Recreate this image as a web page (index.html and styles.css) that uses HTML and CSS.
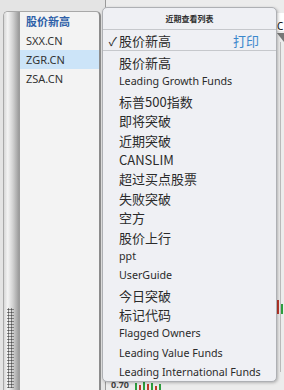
FILE: index.html
```html
<!DOCTYPE html>
<html lang="zh-CN">
<head>
    <meta charset="UTF-8">
    <title>近期查看列表</title>
    <link rel="stylesheet" href="styles.css">
</head>
<body>
    <div class="app">
        <!-- Left symbol list -->
        <div class="side">
            <div class="grip"><div class="dots"></div></div>
            <div class="list">
                <div class="list-head">股价新高</div>
                <div class="list-row">SXX.CN</div>
                <div class="list-row selected">ZGR.CN</div>
                <div class="list-row">ZSA.CN</div>
            </div>
        </div>

        <!-- Chart behind the menu -->
        <div class="chart">
            <div class="combo"><span class="combo-text">C</span></div>
            <div class="combo-arrow"></div>
            <div class="axis-line"></div>
            <div class="candles-right">
                <span class="c red" style="height:14px"></span>
                <span class="c green" style="height:10px"></span>
            </div>
            <div class="bottom-strip">
                <span class="price">0.70</span>
                <span class="mini green" style="height:7px"></span>
                <span class="mini red" style="height:5px"></span>
                <span class="mini green" style="height:8px"></span>
                <span class="mini red" style="height:6px"></span>
                <span class="mini green" style="height:7px"></span>
                <span class="mini red" style="height:4px"></span>
                <span class="mini green" style="height:6px"></span>
            </div>
        </div>
    </div>

    <!-- Recent lists popup -->
    <div class="menu">
        <div class="menu-title">近期查看列表</div>
        <div class="menu-current">
            <span class="check">✓</span>
            <span class="current-name">股价新高</span>
            <span class="print">打印</span>
        </div>
        <ul class="menu-list">
            <li class="cjk">股价新高</li>
            <li class="lat">Leading Growth Funds</li>
            <li class="cjk">标普500指数</li>
            <li class="cjk">即将突破</li>
            <li class="cjk">近期突破</li>
            <li class="cjk">CANSLIM</li>
            <li class="cjk">超过买点股票</li>
            <li class="cjk">失败突破</li>
            <li class="cjk">空方</li>
            <li class="cjk">股价上行</li>
            <li class="lat">ppt</li>
            <li class="lat">UserGuide</li>
            <li class="cjk">今日突破</li>
            <li class="cjk">标记代码</li>
            <li class="lat">Flagged Owners</li>
            <li class="lat">Leading Value Funds</li>
            <li class="lat">Leading International Funds</li>
        </ul>
    </div>
</body>
</html>
```

FILE: styles.css
```css
body { margin: 0; width: 284px; height: 390px; overflow: hidden; background: #e4e4e4; font-family: "Noto Sans", "Noto Sans CJK SC", sans-serif; color: #2b2b2b; position: relative; }
.app { display: flex; height: 390px; }

.side { display: flex; width: 95px; margin: 11px 0 0 3px; border: 1px solid #a8a8a8; border-bottom: none; border-right: 2px solid #8c8c8c; border-radius: 5px 5px 0 0; background: #f3f3f3; }
.grip { width: 15px; display: flex; flex-direction: column; justify-content: flex-end; border-radius: 4px 0 0 0; background: linear-gradient(to right, #d8d8d8, #f4f4f4 25%, #d0d0d0 60%, #9a9a9a); border-right: 1px solid #9c9c9c; }
.dots { height: 80px; margin: 0 0 2px 3px; width: 7px; background-image: radial-gradient(circle, #555 0.9px, transparent 1.2px); background-size: 3px 3px; }
.list { flex: 1; font-size: 11px; padding-top: 1px; }
.list-head { height: 18px; line-height: 18px; padding-left: 6px; color: #2e5fa8; font-weight: bold; }
.list-row { height: 19px; line-height: 19px; padding-left: 6px; color: #333; }
.list-row.selected { background: #cce4f8; }

.chart { flex: 1; position: relative; margin-left: 4px; border-left: 1px solid #9a9a9a; background: #ececec; }
.combo { position: absolute; right: 0; top: 13px; width: 8px; height: 18px; background: #fff; border-left: 1px solid #999; }
.combo-text { font-size: 10px; line-height: 18px; padding-left: 1px; color: #111; }
.combo-arrow { position: absolute; right: 0; top: 33px; width: 0; height: 0; border-left: 7px solid transparent; border-top: 9px solid #777; }
.axis-line { position: absolute; right: 3px; top: 42px; width: 1px; height: 330px; background: #bbb; }
.candles-right { position: absolute; right: 1px; top: 300px; display: flex; gap: 2px; align-items: flex-end; }
.c { width: 2px; }
.red { background: #c0392b; }
.green { background: #2e9e3e; }
.bottom-strip { position: absolute; left: 5px; top: 380px; display: flex; gap: 2px; align-items: flex-end; height: 10px; }
.price { font-size: 9px; font-weight: bold; color: #444; margin-right: 4px; line-height: 10px; }
.mini { width: 2px; }

.menu { position: absolute; left: 102px; top: 7px; width: 173px; height: 373px; background: #eff0f4; border: 1px solid #aeb0b4; border-radius: 5px; box-shadow: 1px 1px 3px rgba(0,0,0,0.25); }
.menu-title { height: 21px; line-height: 21px; text-align: center; font-size: 8px; font-weight: bold; border-bottom: 1px solid #c6c8cc; font-family: "Noto Sans CJK SC", sans-serif; }
.menu-current { display: flex; align-items: center; height: 20px; border-bottom: 1px solid #c6c8cc; font-size: 13px; font-family: "Noto Sans CJK SC", sans-serif; }
.check { width: 14px; text-align: right; padding-right: 2px; font-size: 12px; }
.current-name { flex: 1; }
.print { color: #3a87cc; margin-right: 17px; }
.menu-list { list-style: none; margin: 0; padding: 2px 0 0 16px; }
.menu-list li { height: 19.4px; line-height: 19.4px; white-space: nowrap; }
.cjk { font-size: 13px; font-family: "Noto Sans CJK SC", sans-serif; }
.lat { font-size: 10.7px; }
```
